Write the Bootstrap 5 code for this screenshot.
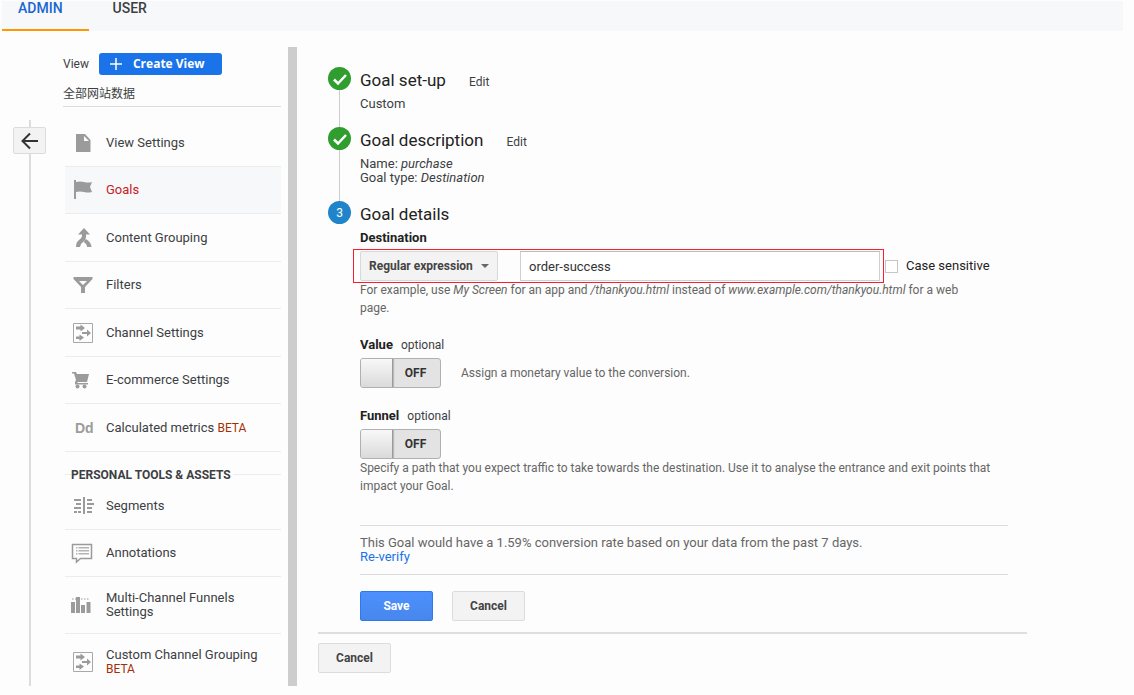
<!DOCTYPE html>
<html lang="en">
<head>
<meta charset="utf-8">
<meta name="viewport" content="width=device-width, initial-scale=1">
<title>Admin – Goals</title>
<link href="https://cdn.jsdelivr.net/npm/bootstrap@5.3.0/dist/css/bootstrap.min.css" rel="stylesheet">
<style>
body{font:13px/14px Roboto,"Noto Sans CJK SC",sans-serif;color:#3c4043;background:#fdfdfd}
.tabs{background:#f7f8fa;height:30px;margin:1px 11px 0 2px}
.tabs a{color:#3c4043;font-size:14px;font-weight:500;line-height:14px;padding:0 24px 14px;text-decoration:none;border-bottom:2px solid transparent}
.tabs a.active{color:#1967d2;border-color:#ff9800;padding:0 26px 14px 16px}
.shell{height:calc(100vh - 40px);overflow:hidden}
.rail{width:33px;margin:89px 17px 0 13px;background:linear-gradient(#dcdcdc,#dcdcdc) 16px 0/2px 100% no-repeat}
.rail button{width:33px;height:27px;margin-top:7px;background:#f3f3f3;border:1px solid #dcdcdc;border-radius:2px}
.side{width:218px;padding-top:22px;overflow-y:auto;scrollbar-width:none}
.side::-webkit-scrollbar{display:none}
.create{background:#1a73e8;color:#fff;font:700 12px/14px "Open Sans",sans-serif;width:123px;height:22px;margin-left:10px;border:0;border-radius:3px}
.account{font-size:12px;line-height:18px;height:32px;padding-top:10px;border-bottom:1px solid #dcdcdc}
.menu li{margin-left:2px;border-bottom:1px solid #ececec}
.menu a{color:#3c4043;text-decoration:none;height:47px}
.menu li:nth-child(even) a{height:46px}
.menu li.long a{height:56px}
.menu .current{background:#f7f8fa}
.menu .current a{color:#c5221f}
.menu svg{width:24px;height:24px;margin:0 11px 0 6px;flex:none;fill:#9b9b9b}
.beta{color:#a52f05;font-size:12px}
.group-title{font-size:12px;font-weight:700;line-height:14px;background:linear-gradient(#ececec,#ececec) 0 6px/100% 1px no-repeat;margin:16px 0 0 2px}
.group-title span{background:#fdfdfd;padding:0 2px 0 0;margin-left:6px}
.bar-track{width:9px;margin:16px 21px 0 7px;background:#cdcdcd}
.pane{margin-right:107px;padding-top:36px;min-width:0}
.step{margin-left:10px;gap:9px}
.step.complete{background:linear-gradient(#ccc,#ccc) 11px 0/1px 100% no-repeat}
.dot{width:23px;height:23px;border-radius:50%;background:#2f9e2f;color:#fff;flex:none;font-size:12px}
.dot.now{background:#2084ca}
.step h2{font-size:17px;line-height:26px;margin:0 0 2px;color:#222;font-weight:400}
.step .edit{font-size:12px;color:#3c4043;text-decoration:none;margin-left:19px}
.step .done{padding-bottom:16px}
.form-body{padding-right:19px}
.caption{font-size:12px;line-height:14px;margin-bottom:6px}
.caption b,.caption label{color:#222;font-weight:700;font-size:13px}
.option{margin-top:21px}
.hint{font-size:12px;line-height:18px;color:#666;margin:0}
.match{position:relative;gap:22px;width:520px}
.match::after{content:"";position:absolute;inset:-2px -4px -2px -7px;border:1px solid #ff1a2e;pointer-events:none}
.match select{appearance:none;width:138px;height:30px;padding:0 8px;border:1px solid #d8d8d8;border-radius:2px;color:#444;font-weight:700;font-size:12px;background:url("data:image/svg+xml,%3Csvg xmlns='http://www.w3.org/2000/svg' viewBox='0 0 8 4'%3E%3Cpath fill='%23666' d='M0 0h8L4 4z'/%3E%3C/svg%3E") right 8px center/8px 4px no-repeat #f3f3f3}
.match input{height:30px;border:1px solid #d0d0d0;border-top-color:#bbb;padding:0 8px;color:#333;background:#fff;min-width:0}
.case input{appearance:none;width:13px;height:13px;border:1px solid #c6c6c6;background:#fff;margin:0 8px 0 5px}
.case{color:#222}
.toggle{width:81px;height:30px;border:1px solid #aeb1b3;border-radius:3px;background:#e3e3e3;color:#333;font-weight:700;font-size:12px;overflow:hidden}
.toggle input{appearance:none;width:32px;height:28px;margin:0;background:linear-gradient(#f8f8f8,#dadada);border-right:1px solid #999;box-shadow:1px 0 1px #bbb}
.toggle span{padding-right:2px}
.verify{border:solid #dcdcdc;border-width:1px 0;padding:10px 0;margin-top:30px;color:#666}
.verify a{color:#1a73e8;text-decoration:none}
.actions{gap:19px}
.act{width:73px;height:30px;font-size:12px;font-weight:700;line-height:14px;border:1px solid #dcdcdc;border-radius:2px;background:#f3f3f3;color:#444}
.act.save{background:linear-gradient(#4d90fe,#4787ed);border-color:#3079ed;color:#fff}
.foot{border-top:2px solid #dedede;margin-top:11px;padding-top:9px}
</style>
<script src="https://cdn.jsdelivr.net/npm/bootstrap@5.3.0/dist/js/bootstrap.bundle.min.js"></script>
</head>
<body>
<svg class="d-none">
  <symbol id="channels" viewBox="0 0 24 24"><path fill="none" stroke="#a8a8a8" d="M2.500 2.500h19v19h-19z"/><path d="M5 5.500h4.500V3.500L14 7l-4.500 3.500v-2H5zM11 11h5V8.500l4 3.500-4 3.500V13h-5zM5 15.500h3.500v-2L13 16.500 8.500 20v-2H5z"/></symbol>
</svg>
<nav class="tabs d-flex"><a class="active" href="#">ADMIN</a><a href="#">USER</a></nav>
<div class="shell d-flex">
  <div class="rail flex-shrink-0">
    <button type="button" class="d-flex align-items-center justify-content-center p-0" aria-label="Back"><svg width="18" height="18" viewBox="0 0 18 18" fill="none" stroke="#333" stroke-width="2"><path d="M17 9H2M9 1.500L1.500 9 9 16.500"/></svg></button>
  </div>
  <aside class="side flex-shrink-0">
    <div class="d-flex align-items-center"><span class="caption mb-0">View</span>
      <button type="button" class="create d-flex align-items-center p-0"><svg class="mx-2" width="18" height="14" viewBox="0 0 18 14" stroke="#fff" stroke-width="1.500"><path d="M3 7h12M9 1v12"/></svg>Create View</button></div>
    <div class="account">全部网站数据</div>
    <ul class="menu list-unstyled mb-0 mt-2 pt-1">
      <li><a href="#" class="d-flex align-items-center"><svg viewBox="0 0 24 24"><path d="M5 3h9l5.500 6v12H5zM13 5v5h5z" fill-rule="evenodd"/></svg>View Settings</a></li>
      <li class="current"><a href="#" class="d-flex align-items-center"><svg viewBox="0 0 24 24"><path d="M3 2h2v2q4-1 8 0t8 0l-2 5 2 5q-4 1-8 0t-8 0v7H3z"/></svg>Goals</a></li>
      <li><a href="#" class="d-flex align-items-center"><svg viewBox="0 0 24 24"><path d="M13 2l6 6.500h-4V11q0 3-3 5t-3 5H5q0-5 3-7t3-4V8.500H7z"/><path d="M15 13q5 3 5.500 8H16q0-3-3.500-5z"/></svg>Content Grouping</a></li>
      <li><a href="#" class="d-flex align-items-center"><svg viewBox="0 0 24 24"><path d="M2.500 4h19v2L14 14v6h-4v-6L2.500 6zM8 8l4 4 4-4z" fill-rule="evenodd"/></svg>Filters</a></li>
      <li><a href="#" class="d-flex align-items-center"><svg><use href="#channels"/></svg>Channel Settings</a></li>
      <li><a href="#" class="d-flex align-items-center"><svg viewBox="0 0 24 24"><path d="M1 4h4l1 2h12l-2 8H7l-1 1h11v1.500H4V14L5 12 3 5.500H1z"/><circle cx="6.500" cy="18.500" r="2"/><circle cx="13.500" cy="18.500" r="2"/></svg>E-commerce Settings</a></li>
      <li><a href="#" class="d-flex align-items-center"><svg viewBox="0 0 24 24"><text x="4" y="17" font-size="14" font-weight="700" font-family="Liberation Sans, sans-serif">Dd</text></svg><span>Calculated metrics <span class="beta">BETA</span></span></a></li>
    </ul>
    <h3 class="group-title"><span>PERSONAL TOOLS &amp; ASSETS</span></h3>
    <ul class="menu list-unstyled mb-0">
      <li><a href="#" class="d-flex align-items-center"><svg viewBox="0 0 24 24"><path d="M12 3h2v17h-2zM3 5h7v2H3zM5 9h5v2H5zM3 13h7v2H3zM3 17h3v2H3zM7 17h3v2H7zM16 5h5v2h-5zM16 9h7v2h-7zM16 13h5v2h-5zM16 17h5v2h-5z"/></svg>Segments</a></li>
      <li><a href="#" class="d-flex align-items-center"><svg viewBox="0 0 24 24"><path fill="none" stroke="#9b9b9b" stroke-width="1.500" d="M1.500 3.500h19v14h-11L5.500 21v-3.500h-4z"/><path fill="#b4b4b4" d="M5 6h1.500v1.500H5zM7.500 6H18v1.500H7.500zM5 9h1.500v1.500H5zM7.500 9H18v1.500H7.500zM5 12h1.500v1.500H5zM7.500 12H18v1.500H7.500z"/></svg>Annotations</a></li>
      <li class="long"><a href="#" class="d-flex align-items-center"><svg viewBox="0 0 24 24"><path d="M0 9h4v11H0zM5 4h4v16H5zM10 12h4v8h-4zM15.500 9h4v11h-4z"/><path stroke="#9b9b9b" stroke-dasharray="1.500 1.500" d="M1 6h18"/></svg><span>Multi-Channel Funnels<br>Settings</span></a></li>
      <li class="long"><a href="#" class="d-flex align-items-center"><svg><use href="#channels"/></svg><span>Custom Channel Grouping<br><span class="beta">BETA</span></span></a></li>
    </ul>
  </aside>
  <div class="bar-track flex-shrink-0"></div>
  <main class="pane flex-fill">
    <section class="step complete d-flex">
      <div class="dot d-flex align-items-center justify-content-center"><svg width="16" height="14" viewBox="0 0 16 14" fill="none" stroke="#fff" stroke-width="2.500"><path d="M2 7.500l4 4L14 3"/></svg></div>
      <div class="done"><h2>Goal set-up <a href="#" class="edit">Edit</a></h2>Custom</div>
    </section>
    <section class="step complete d-flex">
      <div class="dot d-flex align-items-center justify-content-center"><svg width="16" height="14" viewBox="0 0 16 14" fill="none" stroke="#fff" stroke-width="2.500"><path d="M2 7.500l4 4L14 3"/></svg></div>
      <div class="done"><h2>Goal description <a href="#" class="edit">Edit</a></h2>Name: <em>purchase</em><br>Goal type: <em>Destination</em></div>
    </section>
    <section class="step d-flex">
      <div class="dot now d-flex align-items-center justify-content-center">3</div>
      <form class="form-body flex-fill">
        <h2 class="mb-1">Goal details</h2>
        <div class="caption"><label for="dest">Destination</label></div>
        <div class="d-flex align-items-center">
          <div class="match d-flex">
            <select aria-label="Match type"><option>Regular expression</option></select>
            <input id="dest" class="flex-fill" type="text" value="order-success">
          </div>
          <label class="case d-flex align-items-center"><input type="checkbox">Case sensitive</label>
        </div>
        <p class="hint pe-4">For example, use <em>My Screen</em> for an app and <em>/thankyou.html</em> instead of <em>www.example.com/thankyou.html</em> for a web page.</p>
        <div class="caption option"><b>Value</b><span class="ms-2">optional</span></div>
        <div class="d-flex align-items-center"><label class="toggle d-flex align-items-center"><input type="checkbox"><span class="flex-fill text-center">OFF</span></label><p class="hint ms-3 ps-1">Assign a monetary value to the conversion.</p></div>
        <div class="caption option"><b>Funnel</b><span class="ms-2">optional</span></div>
        <label class="toggle d-flex align-items-center"><input type="checkbox"><span class="flex-fill text-center">OFF</span></label>
        <p class="hint">Specify a path that you expect traffic to take towards the destination. Use it to analyse the entrance and exit points that impact your Goal.</p>
        <div class="verify">This Goal would have a 1.59% conversion rate based on your data from the past 7 days.<br><a href="#">Re-verify</a></div>
        <div class="actions d-flex mt-3"><button type="submit" class="act save">Save</button><button type="button" class="act">Cancel</button></div>
      </form>
    </section>
    <div class="foot"><button type="button" class="act">Cancel</button></div>
  </main>
</div>
</body>
</html>
